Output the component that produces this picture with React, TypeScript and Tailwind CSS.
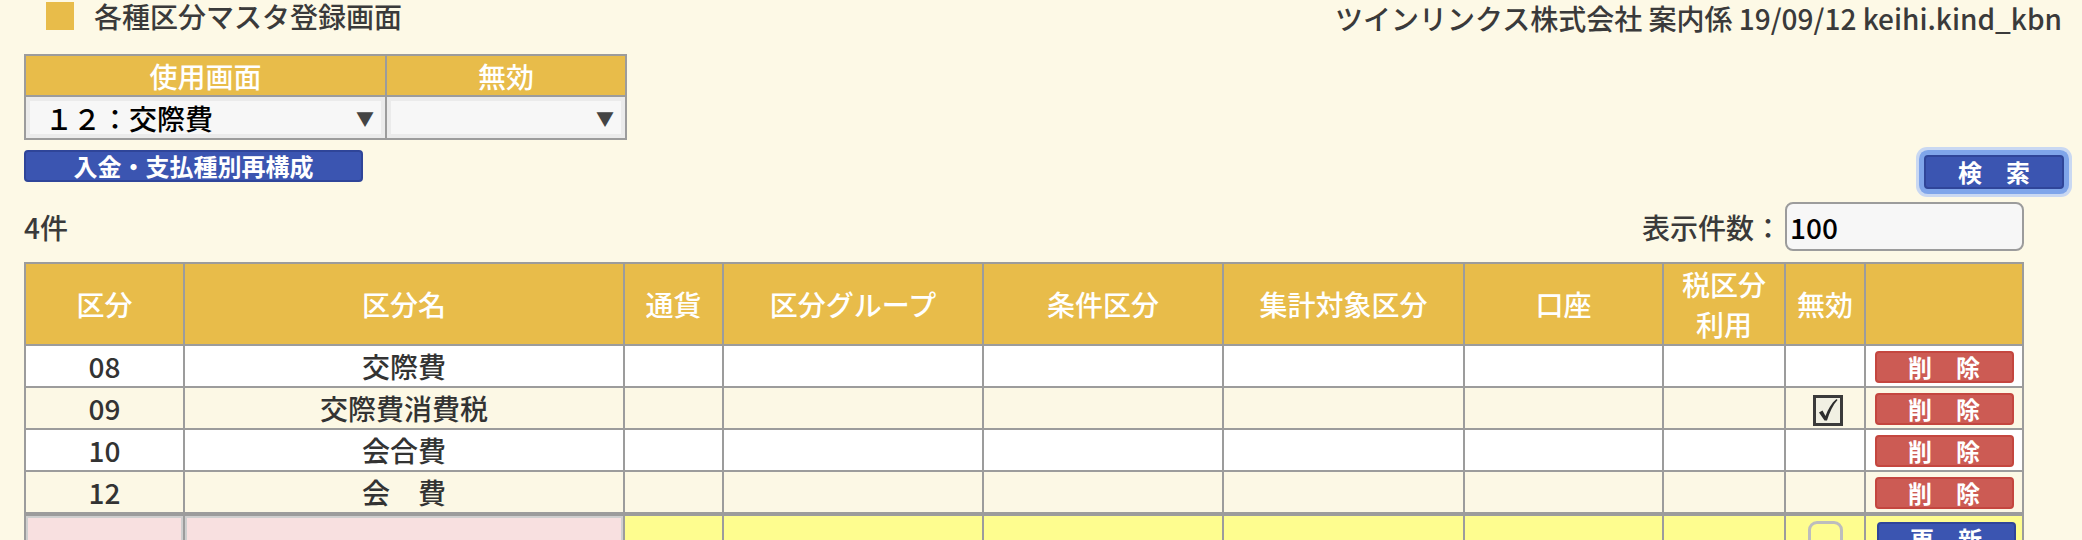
import React from "react";

type Row = { code: string; name: string; checked: boolean; bg: string };

const rows: Row[] = [
  { code: "08", name: "交際費", checked: false, bg: "bg-white" },
  { code: "09", name: "交際費消費税", checked: true, bg: "bg-[#fcf8e5]" },
  { code: "10", name: "会合費", checked: false, bg: "bg-white" },
  { code: "12", name: "会　費", checked: false, bg: "bg-[#fcf8e5]" },
];

function CheckedBox() {
  return (
    <span className="inline-flex h-[31px] w-[30px] items-center justify-center border-[3px] border-[#3b3b3b] bg-[#f1f0e3]">
      <svg width="22" height="24" viewBox="0 0 22 24" aria-hidden="true">
        <path d="M2 14.5 L5.5 12.5 L8.5 18 C11 11 14.5 5 19.5 1 L20.5 2 C16 7 12.5 14 10 22.5 L7.5 22.5 Z" fill="#2d2d2d" />
      </svg>
    </span>
  );
}

function DelButton() {
  return (
    <button className="mx-auto flex h-[32px] w-[139px] items-center justify-center rounded-[4px] border-2 border-[#c4463f] bg-[#cc5b54] text-[24px] font-bold leading-none text-white">
      削　除
    </button>
  );
}

export default function App() {
  const th = "border-r-2 border-b-2 border-[#9c9c9c] bg-[#e8bc4a] p-0 text-center align-middle text-[28px] font-medium leading-[40px] text-white";
  const td = "border-r-2 border-b-2 border-[#9c9c9c] p-0 text-center align-middle text-[28px] font-medium leading-none text-[#333]";
  const tdn = "border-r-2 border-t-2 border-b-2 border-[#9c9c9c] p-0 align-top";
  return (
    <div className="min-h-screen bg-[#fdf9e6] pl-[24px] pr-[18px] font-['Noto_Sans_CJK_JP',sans-serif] text-[#333]">
      {/* Title row */}
      <div className="flex h-[32px] items-center justify-between">
        <div className="flex items-center gap-[20px] pl-[22px]">
          <span className="block h-[28px] w-[28px] bg-[#e8bc4a]" />
          <h1 className="text-[28px] font-medium leading-none text-[#3a3a3a]">各種区分マスタ登録画面</h1>
        </div>
        <div className="pr-[2px] pt-[4px] text-[28px] font-medium leading-none text-[#3a3a3a]">
          ツインリンクス株式会社 案内係 19/09/12 keihi.kind_kbn
        </div>
      </div>

      {/* Filter table */}
      <table className="mt-[22px] w-[603px] table-fixed border-separate border-spacing-0 border-l-2 border-t-2 border-[#9c9c9c]">
        <colgroup>
          <col className="w-[361px]" />
          <col className="w-[240px]" />
        </colgroup>
        <thead>
          <tr>
            <th className="h-[41px] border-r-2 border-b-2 border-[#9c9c9c] bg-[#e8bc4a] p-0 text-[28px] font-medium leading-none text-white">使用画面</th>
            <th className="h-[41px] border-r-2 border-b-2 border-[#9c9c9c] bg-[#e8bc4a] p-0 text-[28px] font-medium leading-none text-white">無効</th>
          </tr>
        </thead>
        <tbody>
          <tr>
            <td className="h-[43px] border-r-2 border-b-2 border-[#9c9c9c] bg-[#ebebeb] px-[4px] py-[4px]">
              <div className="flex h-[33px] items-center justify-between bg-[#f7f7f7] pl-[15px] pr-[7px]">
                <span className="text-[28px] font-medium leading-none text-black">１２：交際費</span>
                <span className="text-[18px] leading-none text-[#444]">▼</span>
              </div>
            </td>
            <td className="h-[43px] border-r-2 border-b-2 border-[#9c9c9c] bg-[#ebebeb] px-[4px] py-[4px]">
              <div className="flex h-[33px] items-center justify-end bg-[#f7f7f7] pr-[7px]">
                <span className="text-[18px] leading-none text-[#444]">▼</span>
              </div>
            </td>
          </tr>
        </tbody>
      </table>

      {/* Buttons row */}
      <div className="mt-[10px] flex items-start justify-between">
        <button className="flex h-[32px] w-[339px] items-center justify-center rounded-[4px] border-2 border-[#2f4599] bg-[#3b55b1] text-[24px] font-bold leading-none text-white">
          入金・支払種別再構成
        </button>
        <button className="mt-[5px] flex h-[34px] w-[140px] items-center justify-center rounded-[4px] border-2 border-[#2f4599] bg-[#3b55b1] text-[24px] font-bold leading-none text-white shadow-[0_0_0_5px_#7fa5ea,0_0_0_8px_#c9d8f2]">
          検　索
        </button>
      </div>

      {/* Count row */}
      <div className="mt-[13px] flex h-[49px] w-[2000px] items-center justify-between">
        <span className="text-[28px] font-medium leading-none text-[#3a3a3a]">4件</span>
        <div className="flex items-center gap-[3px]">
          <span className="text-[28px] font-medium leading-none text-[#3a3a3a]">表示件数：</span>
          <div className="flex h-[49px] w-[239px] items-center rounded-[8px] border-2 border-[#9c9c9c] bg-[#f7f7f7] pl-[3px]">
            <span className="text-[28px] font-medium leading-none text-black">100</span>
          </div>
        </div>
      </div>

      {/* Main table */}
      <table className="mt-[11px] w-[2000px] table-fixed border-separate border-spacing-0 border-l-2 border-t-2 border-[#9c9c9c]">
        <colgroup>
          <col className="w-[159px]" />
          <col className="w-[440px]" />
          <col className="w-[99px]" />
          <col className="w-[260px]" />
          <col className="w-[240px]" />
          <col className="w-[241px]" />
          <col className="w-[199px]" />
          <col className="w-[122px]" />
          <col className="w-[80px]" />
          <col className="w-[158px]" />
        </colgroup>
        <thead>
          <tr>
            <th className={`h-[81px] ${th}`}>区分</th>
            <th className={th}>区分名</th>
            <th className={th}>通貨</th>
            <th className={th}>区分グループ</th>
            <th className={th}>条件区分</th>
            <th className={th}>集計対象区分</th>
            <th className={th}>口座</th>
            <th className={th}>
              税区分
              <br />
              利用
            </th>
            <th className={th}>無効</th>
            <th className={th}></th>
          </tr>
        </thead>
        <tbody>
          {rows.map((r) => (
            <tr key={r.code} className={r.bg}>
              <td className={`h-[42px] ${td}`}>{r.code}</td>
              <td className={td}>{r.name}</td>
              <td className={td}></td>
              <td className={td}></td>
              <td className={td}></td>
              <td className={td}></td>
              <td className={td}></td>
              <td className={td}></td>
              <td className={td}>
                {r.checked ? (
                  <div className="flex justify-center pl-[6px] pt-[4px]">
                    <CheckedBox />
                  </div>
                ) : null}
              </td>
              <td className={`${td} pt-[2px]`}>
                <DelButton />
              </td>
            </tr>
          ))}
          <tr>
            <td className={`${tdn} h-[52px] bg-[#f8e0e0]`}>
              <div className="h-[48px] border-2 border-[#cfcfcf] bg-[#f8e0e0]" />
            </td>
            <td className={`${tdn} bg-[#f8e0e0]`}>
              <div className="h-[48px] border-2 border-[#cfcfcf] bg-[#f8e0e0]" />
            </td>
            <td className={`${tdn} bg-[#fefd8f]`}></td>
            <td className={`${tdn} bg-[#fefd8f]`}></td>
            <td className={`${tdn} bg-[#fefd8f]`}></td>
            <td className={`${tdn} bg-[#fefd8f]`}></td>
            <td className={`${tdn} bg-[#fefd8f]`}></td>
            <td className={`${tdn} bg-[#fefd8f]`}></td>
            <td className={`${tdn} bg-[#fefd8f]`}>
              <div className="flex justify-center pt-[5px]">
                <span className="block h-[36px] w-[35px] rounded-[9px] border-[3px] border-[#bdbdbd]" />
              </div>
            </td>
            <td className={`${tdn} bg-[#fefd8f]`}>
              <div className="flex justify-center pl-[4px] pt-[6px]">
                <button className="flex h-[34px] w-[139px] items-center justify-center rounded-[4px] border-2 border-[#2f4599] bg-[#3b55b1] text-[24px] font-bold leading-none text-white">
                  更　新
                </button>
              </div>
            </td>
          </tr>
        </tbody>
      </table>
    </div>
  );
}
